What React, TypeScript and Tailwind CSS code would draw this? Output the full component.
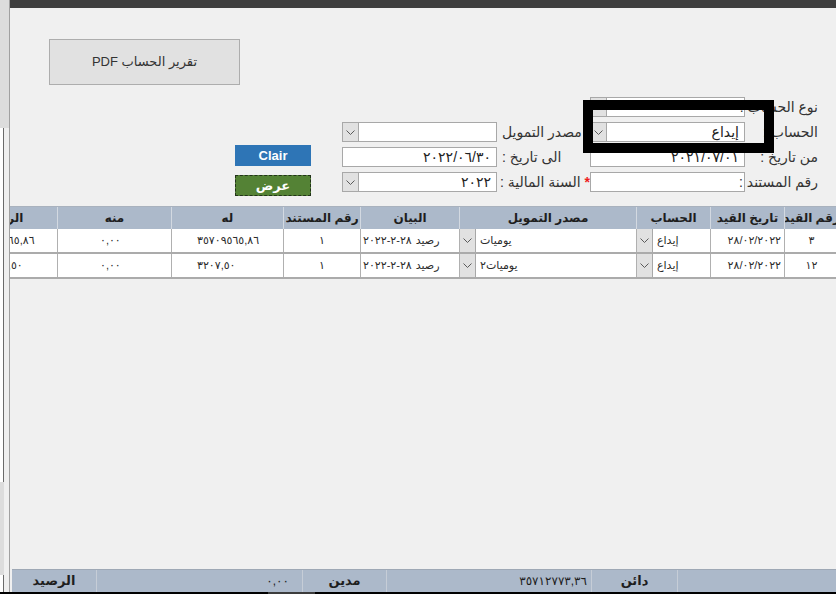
import React from 'react';

const Chevron = () => (
  <svg width="9" height="5" viewBox="0 0 9 5">
    <path d="M0.5 0.5 L4.5 4.5 L8.5 0.5" fill="none" stroke="#5a5a5a" strokeWidth="1" />
  </svg>
);

function Field({ value, combo }: { value?: string; combo?: boolean }) {
  return (
    <div className="flex h-[20px] w-[155px] shrink-0 border border-[#a8a8a8] bg-white">
      {combo ? (
        <div className="flex w-[16px] items-center justify-center border-r border-[#a8a8a8] bg-[#e1e1e1]">
          <Chevron />
        </div>
      ) : null}
      <div dir="ltr" className="flex flex-1 items-center justify-end pr-[5px] text-[14px] text-[#222]">
        {value}
      </div>
    </div>
  );
}

type Col = { title: string; cls: string; align: string };

const cols: Col[] = [
  { title: 'الرصيد', cls: 'w-[108px] -ml-[60px]', align: 'justify-center' },
  { title: 'منه', cls: 'w-[114px]', align: 'justify-start pl-[42px]' },
  { title: 'له', cls: 'w-[112px]', align: 'justify-start pl-[25px]' },
  { title: 'رقم المستند', cls: 'w-[77px]', align: 'justify-center' },
  { title: 'البيان', cls: 'w-[99px]', align: 'justify-start pl-[2px]' },
  { title: 'مصدر التمويل', cls: 'w-[177px]', align: 'justify-start' },
  { title: 'الحساب', cls: 'w-[74px]', align: 'justify-start' },
  { title: 'تاريخ القيد', cls: 'w-[74px]', align: 'justify-end pr-[3px]' },
  { title: 'رقم القيد', cls: 'w-[54px]', align: 'justify-center' },
];

const rows = [
  ['٣٥٧٠٩٥٦٥,٨٦', '٠,٠٠', '٣٥٧٠٩٥٦٥,٨٦', '١', 'رصيد', 'يوميات', 'إيداع', '٢٨/٠٢/٢٠٢٢', '٣'],
  ['٣٢٠٧,٥٠', '٠,٠٠', '٣٢٠٧,٥٠', '١', 'رصيد', 'يوميات٢', 'إيداع', '٢٨/٠٢/٢٠٢٢', '١٢'],
];

function Cell({ col, value, index }: { col: Col; value: string; index: number }) {
  const combo = index === 5 || index === 6;
  return (
    <div className={`flex h-full shrink-0 border-r border-[#b0b0b0] ${col.cls}`}>
      {combo ? (
        <div className="flex w-[16px] items-center justify-center border-r border-[#a8a8a8] bg-[#e1e1e1]">
          <Chevron />
        </div>
      ) : null}
      <div className={`flex flex-1 items-center text-[11px] text-[#2a2a2a] ${combo ? 'justify-start pl-[4px]' : col.align}`}>
        {index === 4 ? (
          <span dir="rtl" className="flex gap-[4px]">
            <span>{value}</span>
            <span dir="ltr">٢٨-٢-٢٠٢٢</span>
          </span>
        ) : combo ? (
          <span dir="rtl">{value}</span>
        ) : (
          <span dir="ltr">{value}</span>
        )}
      </div>
    </div>
  );
}

export default function App() {
  return (
    <div dir="ltr" className="flex h-[594px] w-[836px] flex-col overflow-hidden bg-[#f0f0f0] font-['Liberation_Sans','DejaVu_Sans',sans-serif]">
      <div className="flex h-[592px]">
        {/* left strip */}
        <div className="flex w-[10px] shrink-0 flex-col border-r border-[#a0a0a0]">
          <div className="h-[128px] bg-[#dcdcdc]" />
          <div className="flex h-[354px]">
            <div className="w-[3px] bg-white" />
            <div className="w-[1px] bg-[#6a6a6a]" />
            <div className="flex-1 bg-[#efefef]" />
          </div>
          <div className="flex h-[93px]">
            <div className="w-[4px] bg-[#dcdcdc]" />
            <div className="flex-1 bg-[#efefef]" />
          </div>
          <div className="flex flex-1">
            <div className="w-[3px] bg-white" />
            <div className="w-[1px] bg-[#6a6a6a]" />
            <div className="flex-1 bg-[#efefef]" />
          </div>
        </div>

        {/* main */}
        <div className="flex min-w-0 flex-1 flex-col overflow-hidden">
          <div className="h-[8px] shrink-0 bg-[#3f3f3f]" />

          <div className="flex h-[198px] shrink-0">
            <div className="flex w-[301px] shrink-0 flex-col">
              <button className="ml-[39px] mt-[31px] flex h-[46px] w-[191px] items-center justify-center border border-[#adadad] bg-[#e1e1e1] text-[13px] text-[#333]">
                <span dir="rtl">تقرير الحساب PDF</span>
              </button>
              <div className="ml-[225px] mt-[60px] flex flex-col gap-[9px]">
                <button className="flex h-[21px] w-[76px] items-center justify-center bg-[#2e75b6] text-[13px] font-bold text-white">
                  Clair
                </button>
                <button className="flex h-[21px] w-[76px] items-center justify-center border border-dashed border-[#22331a] bg-[#548235] text-[13px] font-bold text-white">
                  <span dir="rtl">عرض</span>
                </button>
              </div>
            </div>

            <div className="ml-[31px] flex shrink-0 flex-col gap-[5px] pt-[114px]">
              <div className="flex h-[20px]">
                <Field combo />
                <div dir="rtl" className="flex w-[93px] items-center justify-end whitespace-nowrap pl-[5px] text-[14px] text-[#333]">مصدر التمويل</div>
              </div>
              <div className="flex h-[20px]">
                <Field value="٢٠٢٢/٠٦/٣٠" />
                <div dir="rtl" className="flex w-[93px] items-center justify-end whitespace-nowrap pl-[5px] text-[14px] text-[#333]">الى تاريخ :</div>
              </div>
              <div className="flex h-[20px]">
                <Field combo value="٢٠٢٢" />
                <div dir="rtl" className="flex w-[93px] items-center justify-end whitespace-nowrap pl-[3px] text-[14px] text-[#333]">
                  <span className="font-bold text-[#ee1c1c]">*</span>&nbsp;السنة المالية :
                </div>
              </div>
            </div>

            <div className="relative flex shrink-0 flex-col gap-[5px] pt-[89px]">
              {[
                { label: 'نوع الحساب :', value: '', combo: true },
                { label: 'الحساب :', value: 'إيداع', combo: true },
                { label: 'من تاريخ :', value: '٢٠٢١/٠٧/٠١', combo: false },
                { label: 'رقم المستند :', value: '', combo: false },
              ].map((r) => (
                <div key={r.label} className="flex h-[20px]">
                  <Field combo={r.combo} value={r.value} />
                  <div dir="rtl" className="flex w-[77px] items-center justify-start whitespace-nowrap pr-[4px] text-[14px] text-[#333]">
                    {r.label}
                  </div>
                </div>
              ))}
              <div className="absolute left-[-7px] top-[92px] h-[53px] w-[191px] border-[10px] border-black" />
            </div>
          </div>

          {/* table header */}
          <div className="flex h-[23px] shrink-0 border-t border-[#a9b2be] bg-[#acb9ca]">
            {cols.map((c) => (
              <div key={c.title} className={`flex shrink-0 items-center justify-center overflow-hidden border-r border-[#d3d9e1] text-[12px] font-bold text-[#1e1e1e] ${c.cls}`}>
                <span dir="rtl" className="whitespace-nowrap">{c.title}</span>
              </div>
            ))}
          </div>

          {rows.map((r, ri) => (
            <div key={ri} className="flex h-[25px] shrink-0 border-b-2 border-[#ababab] bg-white">
              {cols.map((c, ci) => (
                <Cell key={c.title} col={c} value={r[ci]} index={ci} />
              ))}
            </div>
          ))}

          <div className="flex-1" />

          {/* footer */}
          <div className="ml-[2px] flex h-[23px] shrink-0 border-t border-[#9ea8b5] bg-[#acb9ca] text-[13px] text-[#1e1e1e]">
            <div dir="rtl" className="flex w-[85px] items-center justify-center border-r border-[#c6cdd7] font-bold">الرصيد</div>
            <div dir="ltr" className="flex w-[206px] items-center justify-end border-r border-[#c6cdd7] pr-[13px] text-[12px]">٠,٠٠</div>
            <div dir="rtl" className="flex w-[84px] items-center justify-center border-r border-[#c6cdd7] font-bold">مدين</div>
            <div dir="ltr" className="flex w-[205px] items-center justify-end border-r border-[#c6cdd7] pr-[4px] text-[12px]">٣٥٧١٢٧٧٣,٣٦</div>
            <div dir="rtl" className="flex w-[86px] items-center justify-center border-r border-[#c6cdd7] font-bold">دائن</div>
            <div className="flex-1" />
          </div>
        </div>
      </div>
      <div className="flex h-[2px] shrink-0 bg-black">
        <div className="ml-[268px] w-[47px] bg-[#3c3c3c]" />
      </div>
    </div>
  );
}
